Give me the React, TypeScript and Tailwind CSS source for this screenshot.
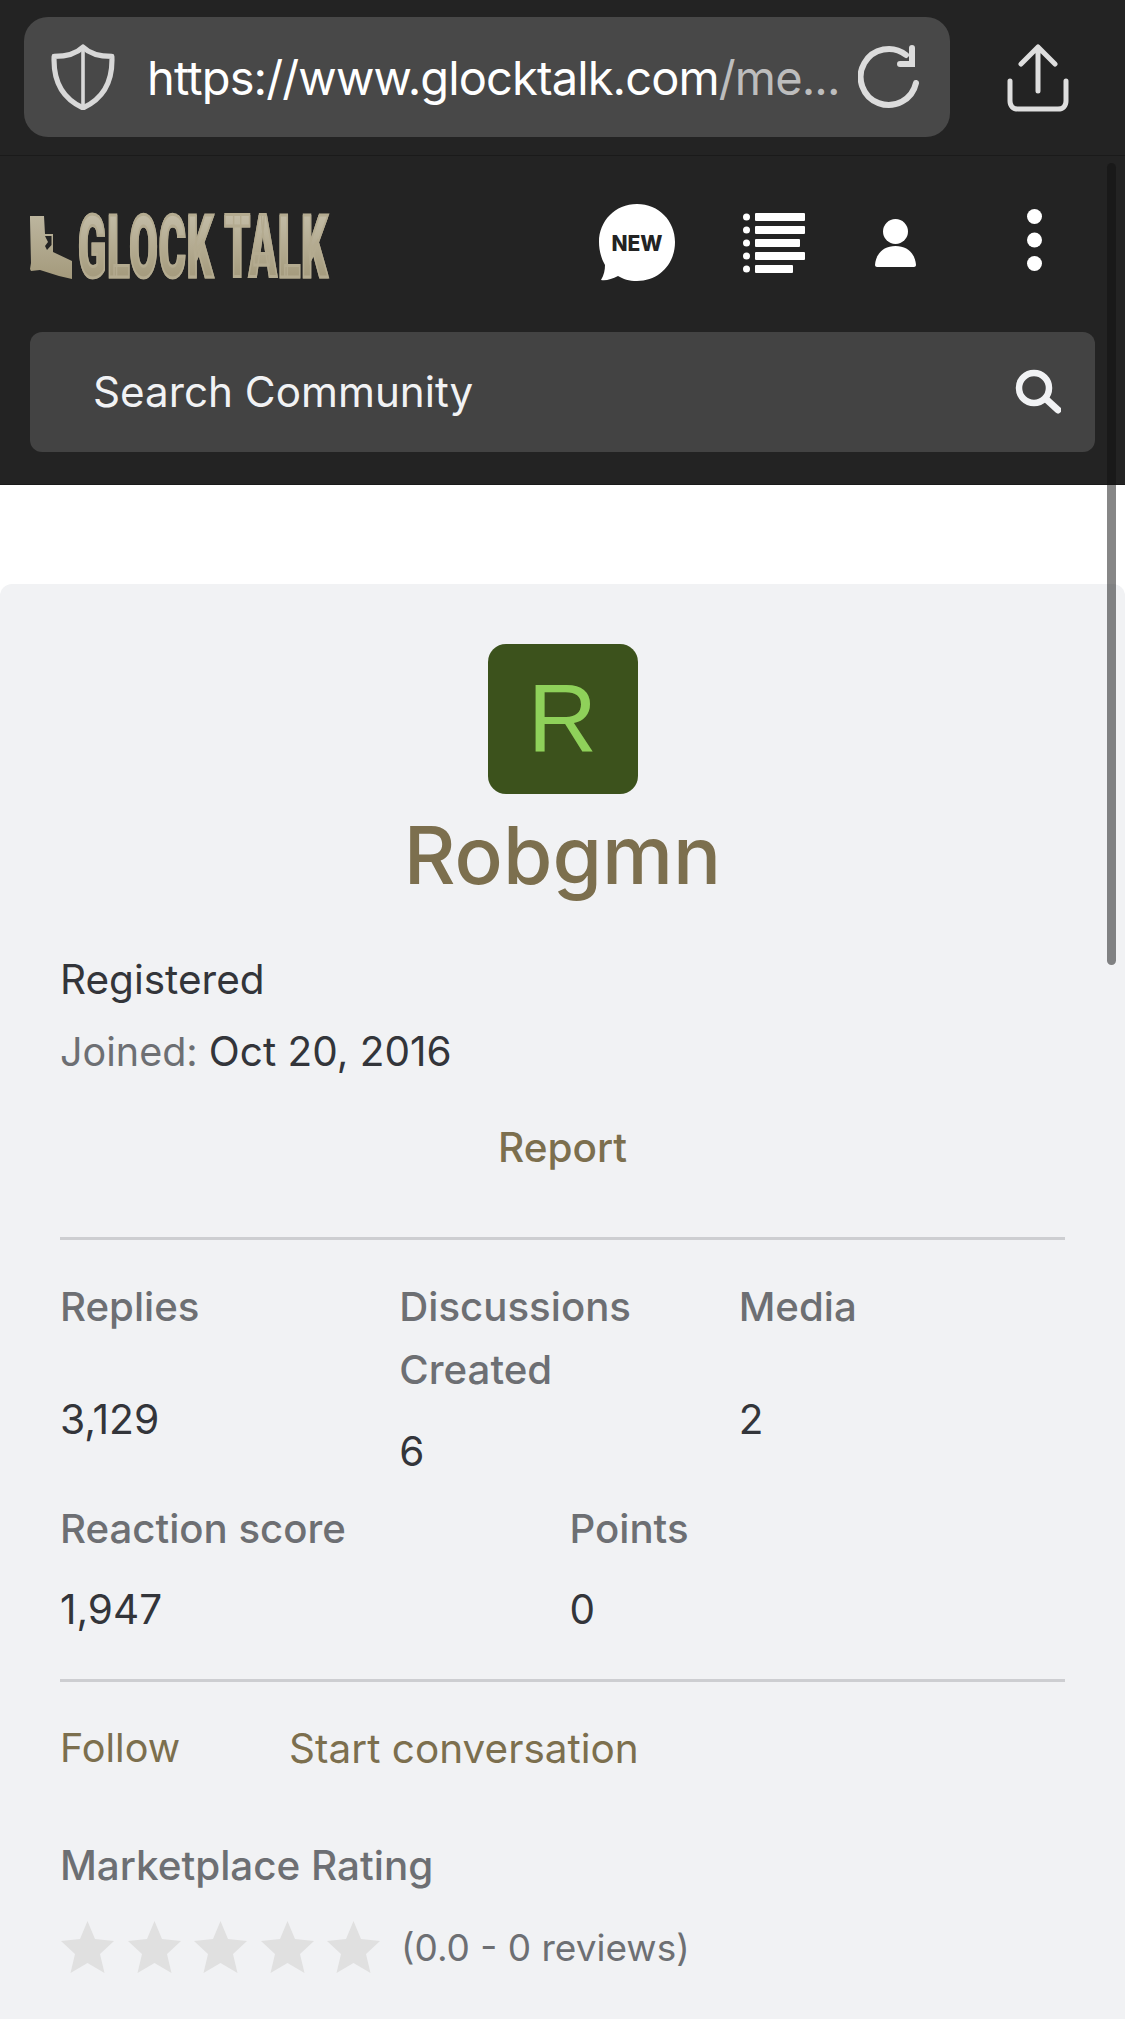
export default function App() {
  const font = { fontFamily: "Inter, 'Noto Sans', sans-serif" };
  const starPath = "M26.5 0 L34 18 L53 20 L39 33 L43.5 52 L26.5 42 L9.5 52 L14 33 L0 20 L19 18 Z";
  return (
    <div className="relative w-[1125px] h-[2019px] overflow-hidden bg-white text-[#33353a]" style={font}>
      {/* Browser bar */}
      <div className="h-[156px] bg-[#232323] border-b border-[#1a1a1a] flex items-start pt-[17px] pl-[24px]">
        <div className="w-[926px] h-[120px] rounded-[24px] bg-[#484848] flex items-center pl-[26px]">
          <svg className="shrink-0" width="66" height="66" viewBox="0 0 64 64" fill="none" stroke="#d8d8d8" strokeWidth="5" strokeLinejoin="round">
            <path d="M32 3 C26 9 16 12 4 12 C3 34 10 52 32 62 C54 52 61 34 60 12 C48 12 38 9 32 3 Z" />
            <path d="M32 4 V61" strokeWidth="3.5" />
          </svg>
          <span className="ml-[31px] text-[47px] leading-none tracking-[-0.88px] text-white whitespace-nowrap">
            https://www.glocktalk.com<span className="text-[#bdbdbd]">/me...</span>
          </span>
          <svg className="ml-[18px] shrink-0" width="62" height="64" viewBox="0 0 62 64" fill="none" stroke="#dcdcdc" strokeWidth="6" strokeLinecap="round">
            <path d="M58 38 A28 28 0 1 1 48 10" />
            <path d="M54 3 V19 H42" />
          </svg>
        </div>
        <svg className="ml-[57px] mt-[27px]" width="62" height="68" viewBox="0 0 62 68" fill="none" stroke="#dedede" strokeWidth="5" strokeLinecap="round" strokeLinejoin="round">
          <path d="M31 3 V47 M14 20 L31 3 L48 20" />
          <path d="M3 37 V57 C3 62 6 65 11 65 H51 C56 65 59 62 59 57 V37" />
        </svg>
      </div>
      {/* Site header */}
      <div className="h-[329px] bg-[#232323] border-b border-[#1a1a1a] px-[30px]">
        <div className="h-[176px] flex items-center">
          <div className="w-[300px] shrink-0 flex items-center mt-[5px]">
            <svg className="shrink-0" width="43" height="64" viewBox="0 0 43 64">
              <defs>
                <linearGradient id="gun" x1="0" y1="0" x2="0" y2="1">
                  <stop offset="0" stopColor="#bcb59e" />
                  <stop offset="1" stopColor="#a49a7c" />
                </linearGradient>
              </defs>
              <path fill="url(#gun)" d="M0 1 H14 L15 19 H23 V37 L42 46 V64 L29 61 L10 55 L1 56 L0 54 L1 48 L0 4 Z" />
              <path fill="#232323" d="M15 21 H21.5 V30 L17 35 L15 31 L18 27 Z" />
            </svg>
            <span className="ml-[5px] text-[88px] leading-[64px] font-black whitespace-nowrap bg-gradient-to-b from-[#c3bca6] to-[#a49a7c] bg-clip-text text-transparent origin-left scale-x-[0.47] font-['Roboto',sans-serif] [-webkit-text-stroke:3px_#b4ab90] tracking-[2px]">
              GLOCK TALK
            </span>
          </div>
          <div className="relative ml-[268px] w-[78px] h-[78px] mt-[-2px] shrink-0">
            <svg className="absolute inset-0" width="78" height="78" viewBox="0 0 78 78">
              <path fill="#fff" d="M39 0 C61 0 77 17 77 38 C77 60 61 77 39 77 C31 77 25 75 20 72 C14 75 8 77 3 76 C6 71 7 66 7 61 C3 54 1 46 1 38 C1 17 17 0 39 0 Z" />
            </svg>
            <span className="absolute inset-0 flex items-center justify-center pt-[1px] text-[21px] font-extrabold text-[#232323]">NEW</span>
          </div>
          <svg className="ml-[67px] mt-[-2px] shrink-0" width="62" height="60" viewBox="0 0 62 60" fill="#fff">
            <circle cx="3.5" cy="4" r="3.5" /><rect x="12" y="0" width="50" height="8" rx="1" />
            <circle cx="3.5" cy="17" r="3.5" /><rect x="12" y="13" width="50" height="8" rx="1" />
            <circle cx="3.5" cy="30" r="3.5" /><rect x="12" y="26" width="45" height="8" rx="1" />
            <circle cx="3.5" cy="43" r="3.5" /><rect x="12" y="39" width="50" height="8" rx="1" />
            <circle cx="3.5" cy="56" r="3.5" /><rect x="12" y="52" width="38" height="8" rx="1" />
          </svg>
          <svg className="ml-[70px] mt-[-2px] shrink-0" width="41" height="48" viewBox="0 0 41 48" fill="#fff">
            <circle cx="20.5" cy="12.5" r="12.5" />
            <path d="M0 46 C1 34 9 27 20.5 27 C32 27 40 34 41 46 C41 47 40 48 39 48 H2 C1 48 0 47 0 46 Z" />
          </svg>
          <svg className="ml-[111px] mt-[-8px] shrink-0" width="15" height="62" viewBox="0 0 15 62" fill="#fff">
            <circle cx="7.5" cy="7.5" r="7.5" /><circle cx="7.5" cy="31" r="7.5" /><circle cx="7.5" cy="54.5" r="7.5" />
          </svg>
        </div>
        <div className="w-[1065px] h-[120px] rounded-[12px] bg-[#434343] flex items-center justify-between pl-[63px] pr-[34px]">
          <span className="text-[42.2px] text-[#f1f2f4] leading-none">Search Community</span>
          <svg width="46" height="46" viewBox="0 0 46 46" fill="none" stroke="#f1f2f4" strokeWidth="6.5" strokeLinecap="round">
            <circle cx="19" cy="19" r="15" />
            <path d="M31 30 L43 41" strokeWidth="7" />
          </svg>
        </div>
      </div>
      {/* Profile card */}
      <div className="mt-[99px] h-[1435px] bg-[#f1f2f4] rounded-t-[12px] px-[60px] pt-[60px]">
        <div className="flex flex-col items-center">
          <div className="w-[150px] h-[150px] rounded-[18px] bg-[#3c521c] flex items-center justify-center text-[#8fd15a] text-[96px] leading-none font-['Liberation_Sans',sans-serif]">
            R
          </div>
          <h1 className="mt-[7px] text-[80px] leading-[108px] font-medium text-[#7c6f4e]">Robgmn</h1>
        </div>
        <div className="mt-[35px] text-[40.5px] leading-[72px]">Registered</div>
        <div className="text-[40.5px] leading-[72px]"><span className="text-[39.5px] text-[#6d6f73]">Joined: </span>Oct 20, 2016</div>
        <div className="mt-[24px] text-center text-[40.5px] leading-[72px] font-medium text-[#7c6f4e]">Report</div>
        <div className="mt-[53px] border-t-[3px] border-[#cdced1]" />
        <div className="mt-[35px] grid grid-cols-3 gap-x-[13px]">
          <div>
            <div className="text-[40.2px] leading-[63px] font-medium text-[#6d6f73]">Replies</div>
            <div className="mt-[50px] text-[40.8px] leading-[63px]">3,129</div>
          </div>
          <div>
            <div className="text-[40.2px] leading-[63px] font-medium text-[#6d6f73]">Discussions Created</div>
            <div className="mt-[19px] text-[40.5px] leading-[63px]">6</div>
          </div>
          <div>
            <div className="text-[40.2px] leading-[63px] font-medium text-[#6d6f73]">Media</div>
            <div className="mt-[50px] text-[40.5px] leading-[63px]">2</div>
          </div>
        </div>
        <div className="mt-[14px] grid grid-cols-2 gap-x-[14px]">
          <div>
            <div className="text-[40.2px] leading-[63px] font-medium text-[#6d6f73]">Reaction score</div>
            <div className="mt-[18px] text-[40.5px] leading-[64px]">1,947</div>
          </div>
          <div>
            <div className="text-[40.2px] leading-[63px] font-medium text-[#6d6f73]">Points</div>
            <div className="mt-[18px] text-[40.5px] leading-[64px]">0</div>
          </div>
        </div>
        <div className="mt-[37px] border-t-[3px] border-[#cdced1]" />
        <div className="mt-[35px] flex gap-[109px] text-[40.5px] leading-[63px] text-[#7c6f4e]">
          <span className="text-[39.6px]">Follow</span>
          <span>Start conversation</span>
        </div>
        <div className="mt-[54px] text-[40.4px] leading-[63px] font-medium text-[#6d6f73]">Marketplace Rating</div>
        <div className="mt-[24px] flex items-center">
          <div className="flex gap-[13.5px] ml-[1px]">
            {[0, 1, 2, 3, 4].map((i) => (
              <svg key={i} width="53" height="52" viewBox="0 0 53 52"><path fill="#e0e0e0" d={starPath} /></svg>
            ))}
          </div>
          <span className="ml-[21px] text-[37px] leading-none text-[#6d6f73]">(0.0 - 0 reviews)</span>
        </div>
      </div>
      {/* Overlay scrollbar */}
      <div className="absolute left-[1107px] top-[163px] w-[9px] h-[802px] rounded-full bg-[#101010]/50" />
    </div>
  );
}
